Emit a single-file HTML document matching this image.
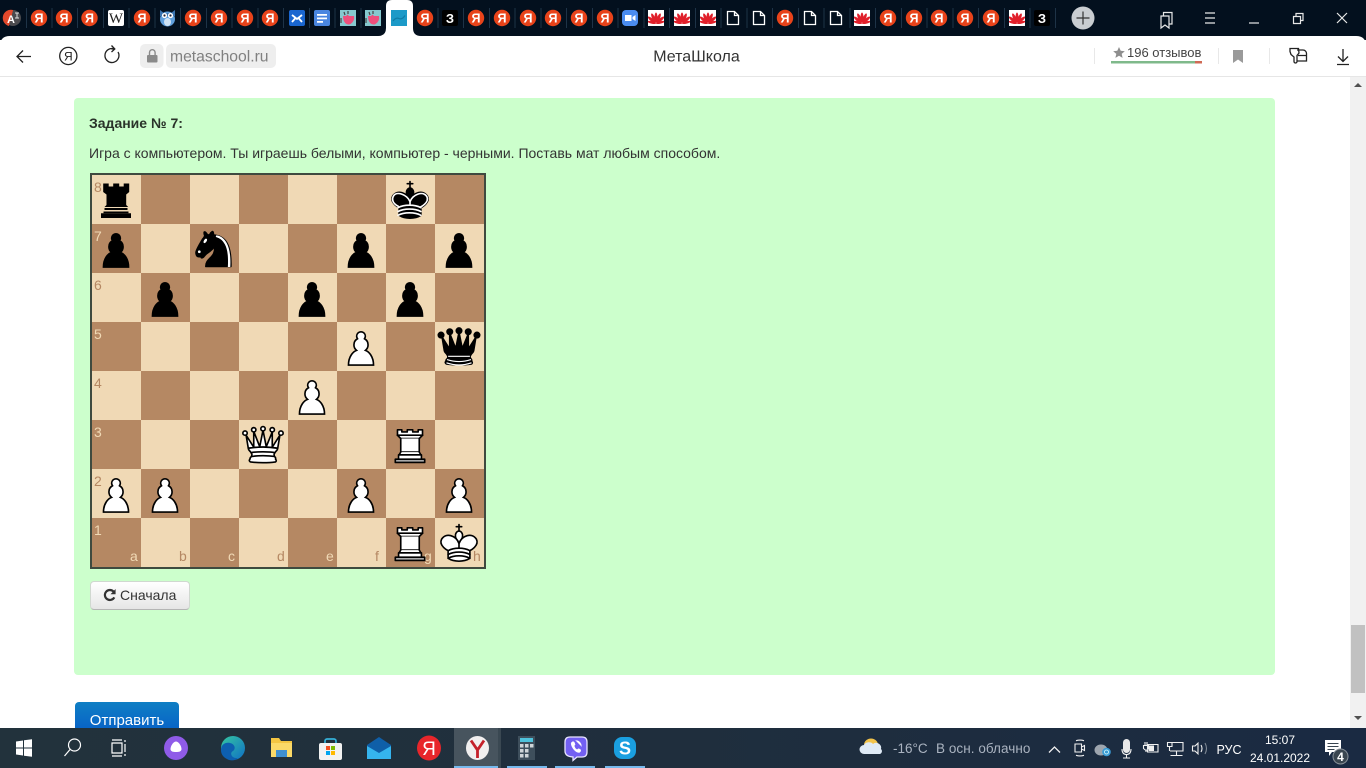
<!DOCTYPE html>
<html lang="ru"><head><meta charset="utf-8"><title>МетаШкола</title>
<style>
html,body{margin:0;padding:0;width:1366px;height:768px;overflow:hidden;background:#fff;font-family:"Liberation Sans","Noto Sans CJK SC",sans-serif}
.abs{position:absolute}
#panel{left:74px;top:98px;width:1201px;height:577px;background:#ccffcc;border-radius:4px;box-sizing:border-box;color:#2f3a30;font-size:14px}
#h{left:89px;top:115px;font-weight:bold;font-size:14px;line-height:16px;color:#2a332a}
#t{left:89px;top:145px;font-size:14px;line-height:16px;color:#333;white-space:nowrap}
#board{left:90px;top:173px;width:392px;height:392px;border:2px solid #3f4a3f;background:conic-gradient(#b58863 25%,#f0d9b5 0 50%,#b58863 0 75%,#f0d9b5 0);background-size:98px 98px}
#btn{left:90px;top:581px;width:100px;height:29px;box-sizing:border-box;border:1px solid #d0d8d0;border-bottom-color:#b5b5b5;border-radius:4px;background:linear-gradient(#fff,#e6e6e6);color:#333;font-size:14px;line-height:27px;padding-left:29px}
#send{left:75px;top:702px;width:104px;height:40px;border-radius:4px;background:linear-gradient(#0f7fc4,#0556c8);color:#fff;font-size:15px;line-height:38px;text-align:center}
#sb{left:1350px;top:77px;width:16px;height:651px;background:#f1f1f1}
#th{left:1351px;top:625px;width:14px;height:68px;background:#c1c1c1}
svg{position:absolute;display:block}
</style></head><body>

<div class="abs" id="panel"></div>
<div class="abs" id="h">Задание № 7:</div>
<div class="abs" id="t">Игра с компьютером. Ты играешь белыми, компьютер - черными. Поставь мат любым способом.</div>
<div class="abs" id="board"></div>

<svg style="left:92px;top:175px" width="392" height="392" viewBox="0 0 392 392" font-family="Liberation Sans" font-size="14">
<defs>
<symbol id="wp" viewBox="0 0 45 45"><path d="M22.5 9c-2.21 0-4 1.79-4 4 0 .89.29 1.71.78 2.38C17.33 16.5 16 18.59 16 21c0 2.03.94 3.84 2.41 5.03-3 1.06-7.41 5.55-7.41 13.47h23c0-7.92-4.41-12.41-7.41-13.47 1.47-1.19 2.41-3 2.41-5.03 0-2.41-1.33-4.5-3.28-5.62.49-.67.78-1.49.78-2.38 0-2.21-1.79-4-4-4z" fill="#fff" stroke="#000" stroke-width="1.5" stroke-linecap="round"/></symbol>
<symbol id="bp" viewBox="0 0 45 45"><path d="M22.5 9c-2.21 0-4 1.79-4 4 0 .89.29 1.71.78 2.38C17.33 16.5 16 18.59 16 21c0 2.03.94 3.84 2.41 5.03-3 1.06-7.41 5.55-7.41 13.47h23c0-7.92-4.41-12.41-7.41-13.47 1.47-1.19 2.41-3 2.41-5.03 0-2.41-1.33-4.5-3.28-5.62.49-.67.78-1.49.78-2.38 0-2.21-1.79-4-4-4z" fill="#000" stroke="#000" stroke-width="1.5" stroke-linecap="round"/></symbol>
<symbol id="wr" viewBox="0 0 45 45"><g fill="#fff" stroke="#000" stroke-width="1.5" stroke-linejoin="round" stroke-linecap="round"><path d="M9 39h27v-3H9v3z" fill="#aaa"/><path d="M12 36v-4h21v4H12zM11 14V9h4v2h5V9h5v2h5V9h4v5"/><path d="M34 14l-3 3H14l-3-3"/><path d="M31 17v12.5H14V17" stroke-linejoin="miter"/><path d="M31 29.5l1.5 2.500h-20l1.500-2.500"/><path d="M11 14h23" fill="none"/></g></symbol>
<symbol id="br" viewBox="0 0 49 49"><path d="M11.700 8.500h5.500v3h4.500v-3h6v3h4.500v-3h5.500V17l-3 2.500V30l2 2H13l2-2V19.500L11.700 17z" fill="#000"/><path d="M13 33h23v2H13z" fill="#000"/><path d="M12 36.500h25v1.800H12z" fill="#000"/><path d="M9.500 38.300h30V43h-30z" fill="#000"/></symbol>
<symbol id="wk" viewBox="0 0 45 45"><g fill="none" stroke="#000" stroke-width="1.5" stroke-linecap="round" stroke-linejoin="round"><path d="M22.500 11.630V6M20 8h5"/><path d="M22.500 25s4.500-7.500 3-10.500c0 0-1-2.500-3-2.500s-3 2.500-3 2.500c-1.500 3 3 10.500 3 10.500" fill="#fff"/><path d="M12.500 37c5.500 3.500 14.500 3.500 20 0v-7s9-4.500 6-10.500c-4-6.500-13.500-3.500-16 4V27v-3.500c-2.500-7.500-12-10.500-16-4-3 6 6 10.500 6 10.500v7" fill="#fff"/><path d="M12.500 30c5.500-3 14.500-3 20 0m-20 3.500c5.500-3 14.500-3 20 0m-20 3.500c5.500-3 14.500-3 20 0"/></g></symbol>
<symbol id="bk" viewBox="0 0 45 45"><g fill="none" stroke="#000" stroke-width="1.5" stroke-linecap="round" stroke-linejoin="round"><path d="M22.500 11.630V6"/><path d="M22.500 25s4.500-7.500 3-10.500c0 0-1-2.500-3-2.500s-3 2.500-3 2.500c-1.500 3 3 10.500 3 10.500" fill="#000"/><path d="M12.500 37c5.500 3.500 14.500 3.500 20 0v-7s9-4.500 6-10.500c-4-6.500-13.500-3.500-16 4V27v-3.500c-2.500-7.500-12-10.500-16-4-3 6 6 10.500 6 10.500v7" fill="#000"/><path d="M20 8h5"/><path d="M32 29.500s8.500-4 6.030-9.650C34.150 14 25 18 22.500 24.500l.01 2.100-.01-2.100C20 18 9.900 14 6.997 19.850c-2.497 5.650 4.853 9 4.853 9" stroke="#fff"/><path d="M11.500 30c5.500-3 15.500-3 21 0m-21 3.500c5.500-3 15.500-3 21 0m-21 3.500c5.500-3 15.500-3 21 0" stroke="#fff"/></g></symbol>
<symbol id="wq" viewBox="0 0 45 45"><g fill="#fff" stroke="#000" stroke-width="1.5" stroke-linejoin="round"><path d="M9 26c8.500-1.500 21-1.500 27 0l2-12-7 11V11l-5.500 13.500-3-15-3 15-5.500-14V25L7 14l2 12z"/><path d="M9 26c0 2 1.500 2 2.500 4 1 1.500 1 1 .5 3.500-1.500 1-1.500 2.500-1.500 2.500-1.500 1.500.5 2.500.5 2.500 6.500 1 16.500 1 23 0 0 0 1.500-1 0-2.500 0 0 .5-1.500-1-2.500-.5-2.500-.5-2 .5-3.500 1-2 2.500-2 2.500-4-8.500-1.500-18.500-1.500-27 0z"/><path d="M11.500 30c3.500-1 18.500-1 22 0M12 33.500c6-1 15-1 21 0" fill="none"/><circle cx="6" cy="12" r="2"/><circle cx="14" cy="9" r="2"/><circle cx="22.500" cy="8" r="2"/><circle cx="31" cy="9" r="2"/><circle cx="39" cy="12" r="2"/></g></symbol>
<symbol id="bq" viewBox="0 0 45 45"><g stroke="#000" stroke-width="1.5" stroke-linejoin="round"><circle cx="6" cy="12" r="2.500"/><circle cx="14" cy="9" r="2.500"/><circle cx="22.500" cy="8" r="2.500"/><circle cx="31" cy="9" r="2.500"/><circle cx="39" cy="12" r="2.500"/><path d="M9 26c8.500-1.500 21-1.500 27 0l2-12-7 11V11l-5.500 13.500-3-15-3 15-5.500-14V25L7 14l2 12z"/><path d="M9 26c0 2 1.500 2 2.500 4 1 1.500 1 1 .5 3.500-1.500 1-1.500 2.500-1.500 2.500-1.500 1.500.5 2.500.5 2.500 6.500 1 16.500 1 23 0 0 0 1.500-1 0-2.500 0 0 .5-1.500-1-2.500-.5-2.500-.5-2 .5-3.500 1-2 2.500-2 2.500-4-8.500-1.500-18.500-1.500-27 0z"/><path d="M12.500 31.500h20M11.500 34.500a35 35 1 0 0 22 0M11 37.500a35 35 1 0 0 23 0" fill="none" stroke="#fff" stroke-width="1.100"/></g></symbol>
<symbol id="bn" viewBox="0 0 45 45"><g stroke="#000" stroke-width="1.5" stroke-linecap="round" stroke-linejoin="round"><path d="M22 10c10.500 1 16.500 8 16 29H15c0-9 10-6.500 8-21"/><path d="M24 18c.38 2.910-5.550 7.370-8 9-3 2-2.820 4.340-5 4-1.042-.94 1.410-3.040 0-3-1 0 .19 1.230-1 2-1 0-4.003 1-4-4 0-2 6-12 6-12s1.890-1.900 2-3.500c-.73-.994-.5-2-.5-3 1-1 3 2.500 3 2.500h2s.78-1.992 2.500-3c1 0 1 3 1 3"/><path d="M9.500 25.500a.5.5 0 1 1-1 0 .5.5 0 1 1 1 0z" fill="#fff" stroke="#fff"/><path d="M15 15.500a.5 1.500 0 1 1-1 0 .5 1.500 0 1 1 1 0z" transform="rotate(30 14.500 15.500)" fill="#fff" stroke="#fff"/><path d="M24.550 10.400l-.45 1.450.5.15c3.150 1 5.650 2.490 7.900 6.750S35.750 29.060 35.250 39l-.05.5h2.250l.05-.5c.5-10.060-.88-16.850-3.250-21.340-2.370-4.490-5.790-6.640-9.190-7.160l-.51-.1z" fill="#fff" stroke="none"/></g></symbol>
</defs>
<g fill="#b58863"><text x="2" y="17">8</text><text x="2" y="115">6</text><text x="2" y="213">4</text><text x="2" y="311">2</text><text x="87" y="386">b</text><text x="185" y="386">d</text><text x="283" y="386">f</text><text x="381" y="386">h</text></g>
<g fill="#f0d9b5"><text x="2" y="66">7</text><text x="2" y="164">5</text><text x="2" y="262">3</text><text x="2" y="360">1</text><text x="38" y="386">a</text><text x="136" y="386">c</text><text x="234" y="386">e</text><text x="332" y="386">g</text></g>
<g transform="translate(-.5 0)">
<use href="#br" x="0" y="0" width="49" height="49"/>
<use href="#bk" x="294" y="0" width="49" height="49"/>
<use href="#bp" x="0" y="49" width="49" height="49"/>
<use href="#bn" x="98" y="49" width="49" height="49"/>
<use href="#bp" x="245" y="49" width="49" height="49"/>
<use href="#bp" x="343" y="49" width="49" height="49"/>
<use href="#bp" x="49" y="98" width="49" height="49"/>
<use href="#bp" x="196" y="98" width="49" height="49"/>
<use href="#bp" x="294" y="98" width="49" height="49"/>
<use href="#wp" x="245" y="147" width="49" height="49"/>
<use href="#bq" x="343" y="147" width="49" height="49"/>
<use href="#wp" x="196" y="196" width="49" height="49"/>
<use href="#wq" x="147" y="245" width="49" height="49"/>
<use href="#wr" x="294" y="245" width="49" height="49"/>
<use href="#wp" x="0" y="294" width="49" height="49"/>
<use href="#wp" x="49" y="294" width="49" height="49"/>
<use href="#wp" x="245" y="294" width="49" height="49"/>
<use href="#wp" x="343" y="294" width="49" height="49"/>
<use href="#wr" x="294" y="343" width="49" height="49"/>
<use href="#wk" x="343" y="343" width="49" height="49"/>
</g>
</svg>

<div class="abs" id="btn">Сначала</div>
<svg style="left:103px;top:588px" width="14" height="14" viewBox="0 0 14 14"><path d="M11.300 9.400A5 5 0 1 1 10.600 3.600" fill="none" stroke="#333" stroke-width="2.200"/><path d="M12.600 1v5.200H7.500z" fill="#333"/></svg>
<div class="abs" id="send">Отправить</div>

<div class="abs" id="sb"></div><div class="abs" id="th"></div>
<svg style="left:1350px;top:77px" width="16" height="651"><path d="M4 10l4-4 4 4z" fill="#505050"/><path d="M4 639l4 4 4-4z" fill="#505050"/></svg>

<!-- browser chrome -->
<svg style="left:0;top:0" width="1366" height="78" viewBox="0 0 1366 78" font-family="Liberation Sans">
<defs>
<symbol id="hw" viewBox="0 0 16 16"><rect width="16" height="16" fill="#fff"/><g fill="#e01f2a"><ellipse cx="8" cy="7.500" rx="1.500" ry="5"/><ellipse cx="8" cy="7.500" rx="1.500" ry="5" transform="rotate(-24 8 13.500)"/><ellipse cx="8" cy="7.500" rx="1.500" ry="5" transform="rotate(24 8 13.500)"/><ellipse cx="8" cy="8" rx="1.500" ry="5" transform="rotate(-50 8 13.500)"/><ellipse cx="8" cy="8" rx="1.500" ry="5" transform="rotate(50 8 13.500)"/><ellipse cx="8" cy="9" rx="1.200" ry="4.500" transform="rotate(-76 8 13.500)"/><ellipse cx="8" cy="9" rx="1.200" ry="4.500" transform="rotate(76 8 13.500)"/></g></symbol>
<symbol id="fl" viewBox="0 0 16 16"><path d="M2.500 1.500h7l4 4v9h-11zM9.500 1.500v4h4" fill="none" stroke="#fff" stroke-width="1.300"/></symbol>
<symbol id="pk" viewBox="0 0 16 16"><rect width="16" height="16" fill="#86c9cf"/><path d="M3 6h3l1.500-1.500L9 6h5q1 5-3.500 8-1.500 1-4 0Q3 12 3 6z" fill="#ee4f7c"/><path d="M4 2l1 3M8 1v3M1 8v5" stroke="#444" stroke-width="1.200"/></symbol>
</defs>
<rect width="1366" height="40" fill="#03101e"/>
<g stroke="#1e3347" stroke-width="1">
<path d="M26.500 8v20M52 8v20M77.500 8v20M103.500 8v20M129 8v20M155 8v20M180.500 8v20M206.500 8v20M232 8v20M258 8v20M283.500 8v20M309.500 8v20M335 8v20M361 8v20M438 8v20M463.500 8v20M489.500 8v20M515 8v20M541 8v20M566.500 8v20M592.500 8v20M618 8v20M644 8v20M669.500 8v20M695.500 8v20M721 8v20M747 8v20M772.500 8v20M798.500 8v20M824 8v20M850 8v20M875.500 8v20M901.500 8v20M927 8v20M953 8v20M978.500 8v20M1004.500 8v20M1030 8v20M1055.500 8v20"/>
</g>
<!-- toolbar -->
<path d="M0 46q0-10 10-10H1356q10 0 10 10V76H0z" fill="#fff"/>
<rect y="76" width="1366" height="1" fill="#e6e6e6"/>
<!-- active tab -->
<path d="M378 36q8 0 8-8V6q0-6 6-6h15q6 0 6 6v22q0 8 8 8z" fill="#fff"/>
<g font-size="12.500" font-weight="bold" fill="#fff" text-anchor="middle">
<circle cx="39" cy="18" r="8.200" fill="#e8431a"/><text x="39" y="22.500">Я</text>
<circle cx="64" cy="18" r="8.200" fill="#e8431a"/><text x="64" y="22.500">Я</text>
<circle cx="89.500" cy="18" r="8.200" fill="#e8431a"/><text x="89.500" y="22.500">Я</text>
<circle cx="142" cy="18" r="8.200" fill="#e8431a"/><text x="142" y="22.500">Я</text>
<circle cx="193" cy="18" r="8.200" fill="#e8431a"/><text x="193" y="22.500">Я</text>
<circle cx="219" cy="18" r="8.200" fill="#e8431a"/><text x="219" y="22.500">Я</text>
<circle cx="245" cy="18" r="8.200" fill="#e8431a"/><text x="245" y="22.500">Я</text>
<circle cx="270" cy="18" r="8.200" fill="#e8431a"/><text x="270" y="22.500">Я</text>
<circle cx="425" cy="18" r="8.200" fill="#e8431a"/><text x="425" y="22.500">Я</text>
<circle cx="476" cy="18" r="8.200" fill="#e8431a"/><text x="476" y="22.500">Я</text>
<circle cx="502" cy="18" r="8.200" fill="#e8431a"/><text x="502" y="22.500">Я</text>
<circle cx="528" cy="18" r="8.200" fill="#e8431a"/><text x="528" y="22.500">Я</text>
<circle cx="553" cy="18" r="8.200" fill="#e8431a"/><text x="553" y="22.500">Я</text>
<circle cx="579" cy="18" r="8.200" fill="#e8431a"/><text x="579" y="22.500">Я</text>
<circle cx="605" cy="18" r="8.200" fill="#e8431a"/><text x="605" y="22.500">Я</text>
<circle cx="785" cy="18" r="8.200" fill="#e8431a"/><text x="785" y="22.500">Я</text>
<circle cx="888" cy="18" r="8.200" fill="#e8431a"/><text x="888" y="22.500">Я</text>
<circle cx="914" cy="18" r="8.200" fill="#e8431a"/><text x="914" y="22.500">Я</text>
<circle cx="939" cy="18" r="8.200" fill="#e8431a"/><text x="939" y="22.500">Я</text>
<circle cx="965" cy="18" r="8.200" fill="#e8431a"/><text x="965" y="22.500">Я</text>
<circle cx="991" cy="18" r="8.200" fill="#e8431a"/><text x="991" y="22.500">Я</text>
</g>
<!-- first tab -->
<circle cx="13" cy="18" r="8" fill="#4a4a4e"/><path d="M13 10L9 26a8 8 0 0 1 4-16z" fill="#e2492c"/><path d="M9 10a8 8 0 0 0-4 8 8 8 0 0 0 4 7l4-15z" fill="#e2492c"/><text x="11" y="23" font-size="11" font-weight="bold" fill="#fff" text-anchor="middle">A</text><path d="M15 13h4M17 13v5M15 18h4" stroke="#ddd" stroke-width="1"/>
<!-- W -->
<rect x="108" y="10" width="16" height="16" rx="2" fill="#fff"/><text x="116" y="23" font-family="Liberation Serif" font-size="15" fill="#222" text-anchor="middle">W</text>
<!-- owl -->
<ellipse cx="167.500" cy="19" rx="7.500" ry="7.500" fill="#5f9fdc"/><ellipse cx="167.500" cy="22" rx="3.500" ry="4" fill="#cfe3f5"/><path d="M160 10l4 3h7l4-3v6h-15z" fill="#3a74b0"/><circle cx="164.500" cy="15.500" r="2.600" fill="#fff"/><circle cx="170.500" cy="15.500" r="2.600" fill="#fff"/><circle cx="164.500" cy="15.500" r="1.100" fill="#223"/><circle cx="170.500" cy="15.500" r="1.100" fill="#223"/>
<!-- mail -->
<rect x="289" y="10" width="16" height="16" rx="2" fill="#1a66d0"/><path d="M292 15l5 4 5-4M292 22l3.500-4M302 22l-3.500-4" stroke="#fff" stroke-width="1.800" fill="none"/>
<!-- docs -->
<rect x="314" y="10" width="16" height="16" rx="2" fill="#4a86e0"/><path d="M317 14h10v1.800h-10zM317 17.500h10v1.800h-10zM317 21h6v1.800h-6z" fill="#fff"/>
<use href="#pk" x="340" y="10" width="16" height="16"/><use href="#pk" x="365" y="10" width="16" height="16"/>
<!-- active favicon -->
<rect x="391" y="10" width="16" height="16" fill="#1c9ac8"/><path d="M393 21q3-4 6-2.500t6-3" stroke="#0f7ca6" fill="none" stroke-width="1.200"/>
<!-- з tabs -->
<rect x="442" y="10" width="16" height="16" rx="2" fill="#000"/><text x="450" y="23" font-size="13" font-weight="bold" fill="#fff" text-anchor="middle">З</text>
<rect x="1034" y="10" width="16" height="16" rx="2" fill="#000"/><text x="1042" y="23" font-size="13" font-weight="bold" fill="#fff" text-anchor="middle">З</text>
<!-- zoom -->
<rect x="622" y="10" width="16" height="16" rx="4" fill="#4a8cf0"/><path d="M625 15h6.500v6H625zM632.500 17l3-2v6l-3-2z" fill="#fff"/>
<use href="#hw" x="648" y="10" width="16" height="16"/><use href="#hw" x="674" y="10" width="16" height="16"/><use href="#hw" x="700" y="10" width="16" height="16"/><use href="#hw" x="854" y="10" width="16" height="16"/><use href="#hw" x="1009" y="10" width="16" height="16"/>
<use href="#fl" x="725" y="10" width="16" height="16"/><use href="#fl" x="751" y="10" width="16" height="16"/><use href="#fl" x="802" y="10" width="16" height="16"/><use href="#fl" x="828" y="10" width="16" height="16"/>
<!-- plus -->
<circle cx="1083" cy="18" r="11.500" fill="#c9cdd1"/><path d="M1083 11.500v13M1076.500 18h13" stroke="#333" stroke-width="1.200"/>
<!-- window controls -->
<g fill="none" stroke="#e8e8e8" stroke-width="1.200">
<path d="M1161 16h8v12l-4-3-4 3zM1163.500 16v-3.500h8.500v11.500h-3"/>
<path d="M1205 13h10M1205 18h10M1205 23h10"/>
<path d="M1249 23h10"/>
<path d="M1293.500 16.500h7v7h-7zM1296 16.500v-3h7v7h-2.500"/>
<path d="M1337 13l10 10M1347 13l-10 10"/>
</g>
<!-- nav icons -->
<g fill="none" stroke="#222" stroke-width="1.300">
<path d="M31 56.500H17M23 50.500l-6 6 6 6"/>
<circle cx="68.300" cy="56" r="8.600"/>
<path d="M118 52a7 7 0 1 1-3.500-3h-3M111.500 45.500l3.300 3.500-3.300 3"/>
</g>
<text x="68.300" y="60.300" font-size="12" fill="#222" text-anchor="middle">Я</text>
<rect x="140" y="44" width="23.500" height="24" rx="5" fill="#eeeeee"/><rect x="166" y="44" width="110" height="24" rx="5" fill="#eeeeee"/>
<rect x="147" y="55" width="10.500" height="7.500" rx="1" fill="#8a8a8a"/><path d="M149.500 55v-2.500a2.800 2.800 0 0 1 5.600 0V55" fill="none" stroke="#8a8a8a" stroke-width="1.400"/>
<text x="170" y="61.500" font-size="15.700" fill="#808080">metaschool.ru</text>
<text x="696.500" y="61.500" font-size="16" fill="#333" text-anchor="middle">МетаШкола</text>
<path d="M1094.500 48v16M1218.500 48v16M1269.500 48v16" stroke="#e8e8e8"/>
<path d="M1119 47l1.700 3.800 4.100.4-3.100 2.700.9 4-3.600-2.100-3.600 2.100.9-4-3.100-2.700 4.100-.4z" fill="#8e8e8e"/>
<text x="1127" y="57" font-size="13" fill="#444">196 отзывов</text>
<rect x="1111" y="61" width="84" height="2.500" fill="#7fb98b"/><rect x="1195" y="61" width="7" height="2.500" fill="#cf6a55"/>
<path d="M1233 50h10v13l-5-3.500-5 3.500z" fill="#9a9a9a"/>
<g fill="none" stroke="#222" stroke-width="1.300">
<path d="M1290 48.500h8.500l.5 4.500-2 2.500v6a1.500 1.500 0 0 1-3 0V57l-3-2.500-1-3z"/><path d="M1297 50h6a3.500 3.500 0 0 1 3.500 3.500v7.500h-9.500M1298 55.500h8.500"/>
<path d="M1343 49v12.500M1338 56.500l5 5 5-5M1337 64.500h12"/>
</g>
</svg>

<!-- taskbar -->
<svg style="left:0;top:728px" width="1366" height="40" viewBox="0 0 1366 40" font-family="Liberation Sans">
<defs><linearGradient id="tb"><stop offset="0" stop-color="#22323c"/><stop offset=".5" stop-color="#1f2e3d"/><stop offset="1" stop-color="#1a2a42"/></linearGradient>
<linearGradient id="eg" x1="0" y1="0" x2="1" y2="1"><stop offset="0" stop-color="#35c7a0"/><stop offset="1" stop-color="#0f6fc6"/></linearGradient></defs>
<rect width="1366" height="40" fill="url(#tb)"/>
<rect x="454" width="44" height="40" fill="#47545e"/><rect x="498" width="3" height="40" fill="#3a4852"/>
<g fill="#76b9ed"><rect x="454" y="38" width="44" height="2"/><rect x="507" y="38" width="40" height="2"/><rect x="555" y="38" width="40" height="2"/><rect x="605" y="38" width="40" height="2"/></g>
<path d="M16 13.500l7-1v7h-7zM24 12.300l8-1.100V19.500h-8zM16 20.500h7v7l-7-1zM24 20.500h8v8.300l-8-1.100z" fill="#fff"/>
<g fill="none" stroke="#fff" stroke-width="1.200"><circle cx="74.500" cy="17" r="6"/><path d="M70 21.500L64.500 28"/><path d="M112 15h10v10h-10zM112 12h10M112 28h10M125 12v2M125 16v8M125 26v2"/></g>
<ellipse cx="176" cy="20" rx="12" ry="12" fill="#8f5be8"/><path d="M176 13.500c3 0 5.500 5 5.500 7.500s-2.500 3-5.500 3-5.500-.5-5.500-3 2.500-7.500 5.500-7.500z" fill="#fff"/>
<circle cx="233" cy="20" r="12" fill="url(#eg)"/><path d="M221 22c0-6 5-8 9-7 5 1 6 6 3 8-4 2-1 8 5 7-3 3-8 3-11 1-4-2-6-5-6-9z" fill="#0d5fb0"/>
<path d="M271 10h8l2 3h11v16h-21z" fill="#f4c542"/><path d="M271 15h21v14h-21z" fill="#fbd968"/><path d="M276 22h11v7h-11z" fill="#3f8fd0"/>
<rect x="319" y="15" width="23" height="17" rx="2" fill="#f2f2f2"/><path d="M325 15v-2a2 2 0 0 1 2-2h7a2 2 0 0 1 2 2v2" fill="none" stroke="#35b0d8" stroke-width="1.700"/><rect x="326" y="18" width="4" height="4" fill="#f25022"/><rect x="331" y="18" width="4" height="4" fill="#7fba00"/><rect x="326" y="23" width="4" height="4" fill="#00a4ef"/><rect x="331" y="23" width="4" height="4" fill="#ffb900"/>
<path d="M367 17l12-8 12 8v14h-24z" fill="#0f5fa8"/><path d="M367 18l12 7 12-7v13h-24z" fill="#35b4ee"/>
<ellipse cx="429" cy="20" rx="12" ry="12.500" fill="#e8262b"/><text x="429" y="27" font-size="19" fill="#fff" text-anchor="middle">Я</text>
<ellipse cx="477.500" cy="20" rx="11.500" ry="12" fill="#f1efef"/><path d="M471 12.500l6.500 9.500 6.500-9.500M477.500 22v8" fill="none" stroke="#c4202a" stroke-width="2.800"/>
<rect x="518" y="8" width="17" height="24" fill="#3e4f5c"/><rect x="520" y="10" width="13" height="4" fill="#4fc3dc"/><g fill="#cfd5d8"><rect x="520" y="16" width="3.500" height="3.500"/><rect x="525" y="16" width="3.500" height="3.500"/><rect x="530" y="16" width="3.500" height="3.500"/><rect x="520" y="21" width="3.500" height="3.500"/><rect x="525" y="21" width="3.500" height="3.500"/><rect x="520" y="26" width="3.500" height="3.500"/><rect x="525" y="26" width="3.500" height="3.500"/></g>
<path d="M570 9h12q5 0 5 5v10q0 5-5 5h-5l-4 3.500V29q-8-.5-8-6V14q0-5 5-5z" fill="#7360f2" stroke="#e8e4ff" stroke-width="1.300"/><path d="M571.500 14.500c-1.500 1.500 2.500 10 7.500 10 1.500 0 2.500-2.500 1-3.300l-1.700-.5-1 .8c-1.500 0-3-2.300-3-4l.8-.8-.8-2.500c-.8-.8-1.800-.8-2.800.3zM575.500 12.500q5.500 0 6 6" fill="#fff" stroke="#fff" stroke-width=".5"/>
<rect x="614" y="9" width="22" height="22" rx="8" fill="#1a9fe0"/><text x="625" y="26.500" font-size="18" font-weight="bold" fill="#fff" text-anchor="middle">S</text>
<!-- tray -->
<ellipse cx="871" cy="17" rx="7" ry="6.500" fill="#f2c34a"/><path d="M864 26a4.500 4.500 0 0 1 0-9c1-3 7-4 9-1a5 5 0 0 1 8 5 3 3 0 0 1-1 5z" fill="#dfeaf5"/>
<text x="893" y="25" font-size="13.500" fill="#aab3c0">-16°C</text>
<text x="936" y="25" font-size="13.500" fill="#aab3c0" letter-spacing=".05">В осн. облачно</text>
<g fill="none" stroke="#f0f0f0" stroke-width="1.100">
<path d="M1049 24.500l5.500-5.500 5.500 5.500" stroke-width="1.300"/>
<!-- camera --><path d="M1075 16h6.500v8H1075zM1081.500 19l3-1.500v5l-3-1.500M1076 12.700q4-1.300 8 0M1076 27.300q4 1.300 8 0"/>
<!-- mic stand --><path d="M1122 21q0 5.500 4.500 5.500t4.500-5.500M1126.500 26.500v3M1123 30h7"/>
<!-- battery --><path d="M1147.500 16.500h10.500v7.500h-10.500zM1143.500 17.500h5v3l-2.500 2-2.500-2zM1145 14v3.500M1147 14v3.500M1146 22.500v1.500"/>
<!-- network --><path d="M1167.500 14.500h4.500v4h-4.500zM1172 14.500h11v8.500h-13M1169.500 18.500v4.500M1176.500 23v4M1170.500 27.500h12"/>
<!-- speaker --><path d="M1192.500 18h2.500l3-2.800v10.600l-3-2.800h-2.500zM1201 17q2 3.500 0 7"/>
<path d="M1205 15q3 5.500 0 11" stroke="#7d8894"/>
</g>
<rect x="1123" y="11" width="7" height="14" rx="3.500" fill="#e8e8e8"/><rect x="1148.500" y="17.500" width="5.500" height="5.500" fill="#f0f0f0"/>
<ellipse cx="1101" cy="22" rx="6.500" ry="5.500" fill="#9da5ae"/><circle cx="1106.500" cy="24" r="4.300" fill="#3a9bd5"/><circle cx="1106.500" cy="24" r="2" fill="none" stroke="#dff" stroke-width=".8"/>
<text x="1229" y="26" font-size="12.500" fill="#fff" text-anchor="middle">РУС</text>
<text x="1280" y="16" font-size="12" fill="#fff" text-anchor="middle">15:07</text>
<text x="1280" y="34" font-size="12" fill="#fff" text-anchor="middle">24.01.2022</text>
<path d="M1325 12h16v12h-9l-3 4v-4h-4z" fill="#fff"/><path d="M1327.500 15.500h11M1327.500 18.500h11M1327.500 21.500h7" stroke="#38444f"/>
<circle cx="1340.500" cy="28.500" r="7.500" fill="#3a4650" stroke="#8a929a"/><text x="1340.500" y="33" font-size="12" font-weight="bold" fill="#fff" text-anchor="middle">4</text>
</svg>
</body></html>
